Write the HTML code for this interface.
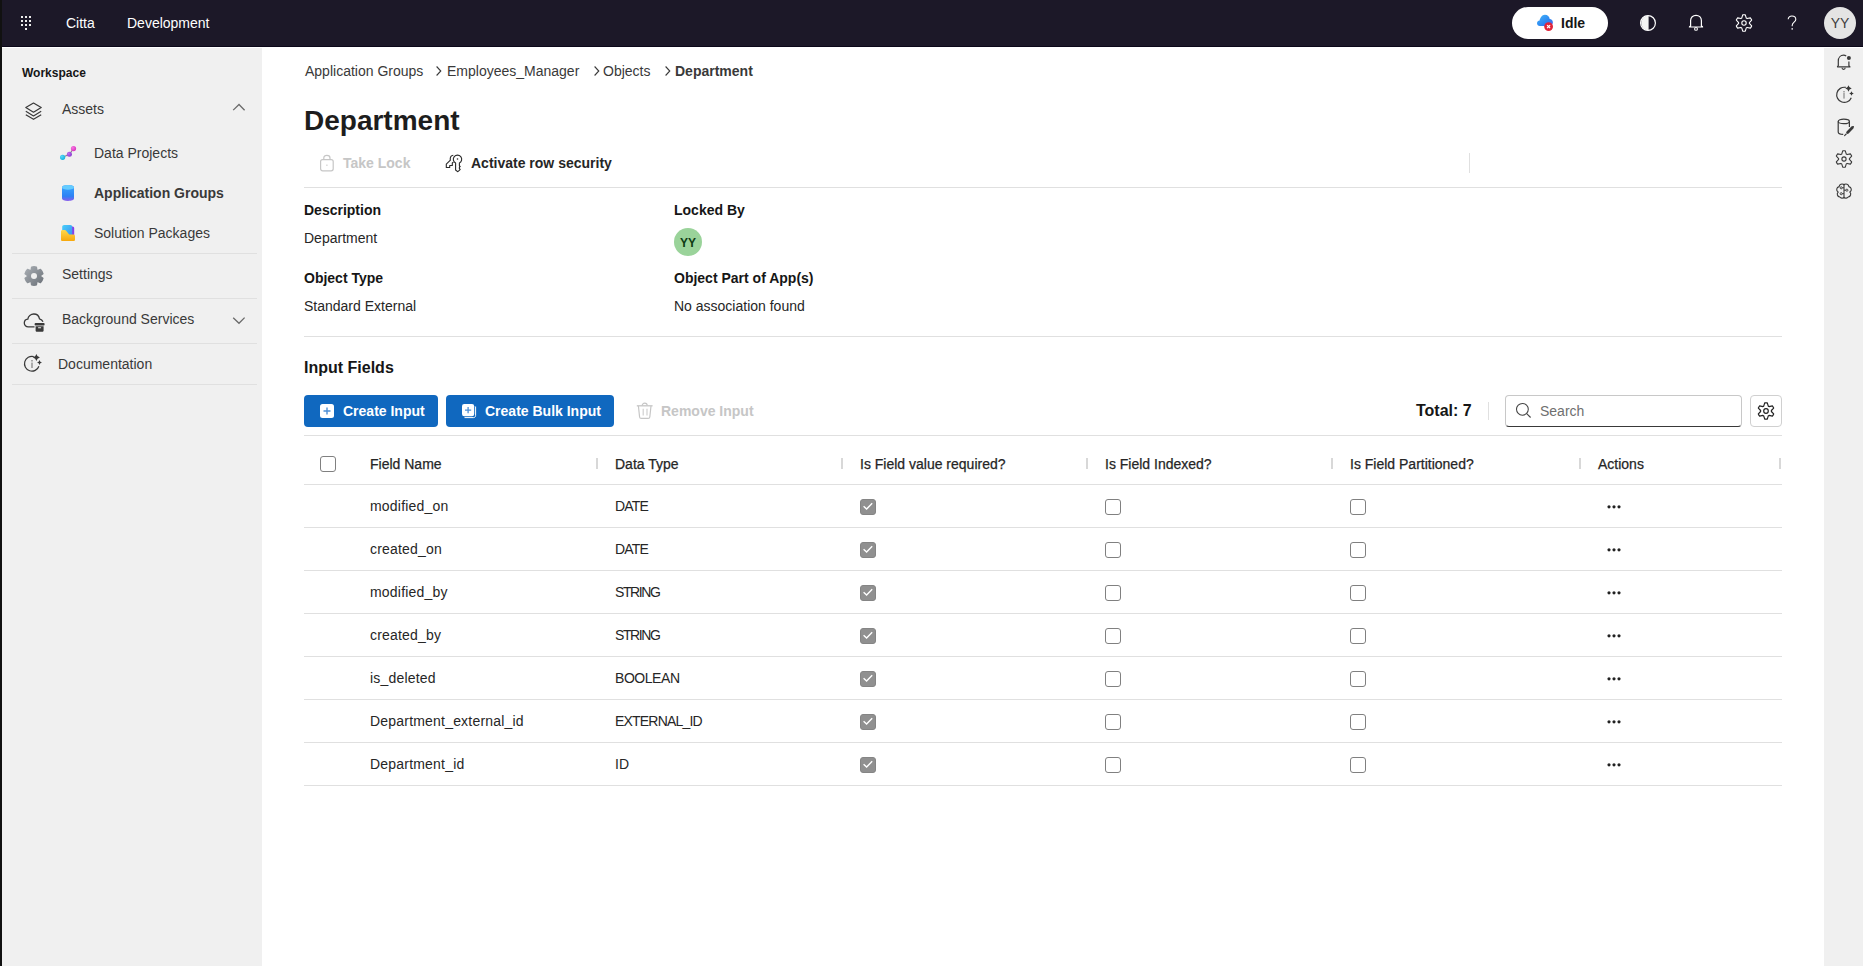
<!DOCTYPE html>
<html><head><meta charset="utf-8"><style>
*{box-sizing:border-box;margin:0;padding:0}
html,body{width:1863px;height:966px;overflow:hidden;background:#fff;font-family:"Liberation Sans",sans-serif;color:#161616}
.a{position:absolute}
.t{position:absolute;white-space:nowrap;line-height:1;font-size:14px}
.b{font-weight:700}
svg{position:absolute;overflow:visible}
.hd{color:#fff}
.sb{color:#393939}
.div{position:absolute;height:1px;background:#e0e0e0}
.cb{position:absolute;width:16px;height:16px;border:1.5px solid #808080;border-radius:3px;background:#fff}
.cbk{position:absolute;width:16px;height:16px;border-radius:3px;background:#909090;border:1px solid #858585}
.dot{position:absolute;width:3px;height:3px;border-radius:50%;background:#222}
.tc{color:#262626}
.sep{position:absolute;width:2px;height:11px;background:#d8d8d8}
</style></head><body>
<div class="a" style="left:0;top:0;width:1863px;height:47px;background:#1c1828;border-bottom:1px solid #0b0719"></div>
<div class="a" style="left:0;top:0;width:2px;height:966px;background:#111"></div>
<div class="a" style="left:2px;top:48px;width:260px;height:918px;background:#f0f0f0"></div>
<div class="a" style="left:1824px;top:48px;width:39px;height:918px;background:#f0f0f0"></div>
<svg style="left:0;top:0" width="50" height="47"><g fill="#ececec"><rect x="21" y="16" width="2" height="2"/><rect x="25" y="16" width="2" height="2"/><rect x="29" y="16" width="2" height="2"/><rect x="21" y="20" width="2" height="2"/><rect x="25" y="20" width="2" height="2"/><rect x="29" y="20" width="2" height="2"/><rect x="21" y="24" width="2" height="2"/><rect x="25" y="24" width="2" height="2"/><rect x="29" y="24" width="2" height="2"/><rect x="25" y="28" width="2" height="2"/></g></svg>
<div class="t hd" style="left:66px;top:16px">Citta</div>
<div class="t hd" style="left:127px;top:16px">Development</div>
<div class="a" style="left:1512px;top:7px;width:96px;height:32px;border-radius:16px;background:#fff"></div>
<svg style="left:1536px;top:14px" width="18" height="18" viewBox="0 0 18 18">
<defs><linearGradient id="cg" x1="0" y1="0" x2="1" y2="1"><stop offset="0" stop-color="#45b6f8"/><stop offset="0.6" stop-color="#2b86f2"/><stop offset="1" stop-color="#5a5de6"/></linearGradient></defs>
<path d="M3.8 11.9 C2.2 11.9 1 10.7 1 9.2 C1 7.7 2.2 6.5 3.6 6.5 C4 4.3 5.8 0.8 8.9 0.8 C11.6 0.8 13.4 2.6 13.7 5.1 C15.5 5.3 16.9 6.6 16.9 8.4 C16.9 10.3 15.4 11.9 13.5 11.9 Z" fill="url(#cg)"/>
<circle cx="12.6" cy="12.6" r="4.4" fill="#e0243a"/>
<path d="M11.1 11.1 L14.1 14.1 M14.1 11.1 L11.1 14.1" stroke="#fff" stroke-width="1.3"/>
</svg>
<div class="t b" style="left:1561px;top:16px;color:#161616">Idle</div>
<svg style="left:1640px;top:15px" width="16" height="16" viewBox="0 0 16 16">
<circle cx="8" cy="8" r="7.4" fill="none" stroke="#fff" stroke-width="1.2"/>
<path d="M8.6 0.6 A7.4 7.4 0 0 0 8.6 15.4 Z" fill="#f4f4f4"/>
</svg>
<svg style="left:1688px;top:14px" width="16" height="18" viewBox="0 0 16 18">
<path d="M1.4 13 C1.4 12.5 1.7 12.2 2.6 12.1 V6.6 C2.6 3.4 5 1.3 8 1.3 C11 1.3 13.4 3.4 13.4 6.6 V12.1 C14.3 12.2 14.6 12.5 14.6 13 Z" fill="none" stroke="#fff" stroke-width="1.2" stroke-linejoin="round"/>
<circle cx="8" cy="14.9" r="1.4" fill="none" stroke="#fff" stroke-width="1.1"/>
</svg>
<svg style="left:1735px;top:14px" width="18" height="18" viewBox="0 0 18 18">
<path d="M6.72 4.11 L7.72 0.90 A8.20 8.20 0 0 1 10.28 0.90 L11.28 4.11 A5.40 5.40 0 0 1 12.10 4.58 L15.37 3.84 A8.20 8.20 0 0 1 16.66 6.06 L14.38 8.53 A5.40 5.40 0 0 1 14.38 9.47 L16.66 11.94 A8.20 8.20 0 0 1 15.37 14.16 L12.10 13.42 A5.40 5.40 0 0 1 11.28 13.89 L10.28 17.10 A8.20 8.20 0 0 1 7.72 17.10 L6.72 13.89 A5.40 5.40 0 0 1 5.90 13.42 L2.63 14.16 A8.20 8.20 0 0 1 1.34 11.94 L3.62 9.47 A5.40 5.40 0 0 1 3.62 8.53 L1.34 6.06 A8.20 8.20 0 0 1 2.63 3.84 L5.90 4.58 A5.40 5.40 0 0 1 6.72 4.11 Z" fill="none" stroke="#fff" stroke-width="1.1" stroke-linejoin="round"/>
<circle cx="9" cy="9" r="2.2" fill="none" stroke="#fff" stroke-width="1.1"/>
</svg>
<svg style="left:1786px;top:15px" width="12" height="17" viewBox="0 0 12 17">
<path d="M2.2 4.3 C2.2 2.2 3.9 1 5.9 1 C8.1 1 9.8 2.5 9.8 4.4 C9.8 7 6.2 7.4 6.2 10.3 V11.2" fill="none" stroke="#fff" stroke-width="1.1"/>
<rect x="5.5" y="13.2" width="1.4" height="1.4" fill="#fff"/>
</svg>
<div class="a" style="left:1824px;top:7px;width:32px;height:32px;border-radius:50%;background:#e4e4e4"></div>
<div class="t" style="left:1830px;top:16px;width:20px;text-align:center;color:#3d3d3d">YY</div>
<div class="t b" style="left:22px;top:67px;font-size:12px;color:#161616">Workspace</div>
<svg style="left:25px;top:102px" width="18" height="19" viewBox="0 0 18 19">
<path d="M8.5 1 L16.2 5.6 L8.5 10.2 L0.8 5.6 Z" fill="none" stroke="#393939" stroke-width="1.2" stroke-linejoin="round"/>
<path d="M0.8 9.3 L8.5 13.9 L16.2 9.3" fill="none" stroke="#393939" stroke-width="1.2" stroke-linejoin="round"/>
<path d="M0.8 12.7 L8.5 17.3 L16.2 12.7" fill="none" stroke="#393939" stroke-width="1.2" stroke-linejoin="round"/>
</svg>
<div class="t sb" style="left:62px;top:102px">Assets</div>
<svg style="left:231px;top:101px" width="16" height="10" viewBox="0 0 16 10">
<path d="M2.2 9.1 L8 3.5 L13.6 9.2" fill="none" stroke="#6a6a6a" stroke-width="1.3"/>
</svg>
<svg style="left:58px;top:144px" width="18" height="18" viewBox="0 0 18 18">
<path d="M4.6 13.3 L11.4 10.3 L15.5 4.6" stroke="#8a8290" stroke-width="1.1" fill="none"/>
<defs><radialGradient id="d1" cx="0.35" cy="0.35" r="0.7"><stop offset="0" stop-color="#5ad8f8"/><stop offset="1" stop-color="#10b0e0"/></radialGradient>
<radialGradient id="d2" cx="0.35" cy="0.35" r="0.7"><stop offset="0" stop-color="#c070f0"/><stop offset="1" stop-color="#8a38d0"/></radialGradient>
<radialGradient id="d3" cx="0.35" cy="0.35" r="0.7"><stop offset="0" stop-color="#f878e0"/><stop offset="1" stop-color="#d830c0"/></radialGradient></defs>
<circle cx="4.6" cy="13.3" r="2.6" fill="url(#d1)"/>
<circle cx="11.4" cy="10.3" r="2.5" fill="url(#d2)"/>
<circle cx="15.5" cy="4.6" r="2.6" fill="url(#d3)"/>
</svg>
<div class="t sb" style="left:94px;top:146px">Data Projects</div>
<svg style="left:61px;top:184px" width="14" height="18" viewBox="0 0 14 18">
<defs><linearGradient id="cyl" x1="0" y1="0" x2="0" y2="1"><stop offset="0" stop-color="#3aa8ff"/><stop offset="0.7" stop-color="#2d82f4"/><stop offset="1" stop-color="#8a5cec"/></linearGradient></defs>
<path d="M1 3.4 C1 1.8 3.6 1 7 1 C10.4 1 13 1.8 13 3.4 V14.6 C13 16.2 10.4 17 7 17 C3.6 17 1 16.2 1 14.6 Z" fill="url(#cyl)"/>
<ellipse cx="7" cy="3.4" rx="6" ry="2.4" fill="#66ccff"/>
</svg>
<div class="t b sb" style="left:94px;top:186px">Application Groups</div>
<svg style="left:60px;top:224px" width="16" height="18" viewBox="0 0 16 18">
<defs><linearGradient id="spg" x1="0" y1="0" x2="1" y2="1"><stop offset="0" stop-color="#48d0fa"/><stop offset="1" stop-color="#3c8ef0"/></linearGradient>
<linearGradient id="spy" x1="0" y1="0" x2="0" y2="1"><stop offset="0" stop-color="#ffd84a"/><stop offset="1" stop-color="#f7a80c"/></linearGradient></defs>
<rect x="4" y="2.5" width="10.2" height="10" rx="1.5" fill="#8640e8"/>
<path d="M2.2 3 C2.2 1.8 3 1 4.2 1 H10.4 C11.6 1 12.2 1.8 12.2 3 V13 H2.2 Z" fill="url(#spg)"/>
<path d="M1 7.5 C1 6.6 1.6 6 2.6 6 H4.6 C5.3 6 5.8 6.3 6.3 6.9 L9.2 10.4 H13.5 C14.4 10.4 15 11 15 11.9 V15.4 C15 16.3 14.4 17 13.5 17 H2.5 C1.6 17 1 16.3 1 15.4 Z" fill="url(#spy)"/>
</svg>
<div class="t sb" style="left:94px;top:226px">Solution Packages</div>
<div class="div" style="left:12px;top:253px;width:245px"></div>
<svg style="left:24px;top:266px" width="20" height="20" viewBox="0 0 20 20">
<defs><linearGradient id="sg" x1="0" y1="0" x2="1" y2="1"><stop offset="0" stop-color="#a8adb3"/><stop offset="1" stop-color="#6c7279"/></linearGradient></defs>
<path d="M7.14 4.39 L7.62 1.11 A9.20 9.20 0 0 1 12.38 1.11 L12.86 4.39 A6.30 6.30 0 0 1 13.43 4.72 L16.51 3.49 A9.20 9.20 0 0 1 18.89 7.62 L16.29 9.67 A6.30 6.30 0 0 1 16.29 10.33 L18.89 12.38 A9.20 9.20 0 0 1 16.51 16.51 L13.43 15.28 A6.30 6.30 0 0 1 12.86 15.61 L12.38 18.89 A9.20 9.20 0 0 1 7.62 18.89 L7.14 15.61 A6.30 6.30 0 0 1 6.57 15.28 L3.49 16.51 A9.20 9.20 0 0 1 1.11 12.38 L3.71 10.33 A6.30 6.30 0 0 1 3.71 9.67 L1.11 7.62 A9.20 9.20 0 0 1 3.49 3.49 L6.57 4.72 A6.30 6.30 0 0 1 7.14 4.39 Z" fill="url(#sg)" stroke="url(#sg)" stroke-width="1.4" stroke-linejoin="round"/>
<circle cx="10" cy="10" r="3" fill="#f0f0f0"/>
</svg>
<div class="t sb" style="left:62px;top:267px">Settings</div>
<div class="div" style="left:12px;top:298px;width:245px"></div>
<svg style="left:23px;top:311px" width="22" height="22" viewBox="0 0 22 22">
<path d="M11.5 15.8 H5.2 C3 15.8 1.3 14.1 1.3 12 C1.3 10 2.8 8.4 4.8 8.2 C5.3 5.4 7.8 3 10.8 3 C13.7 3 16 5.1 16.5 7.8 C18.1 8.2 19.4 9.3 20 10.8" fill="none" stroke="#393939" stroke-width="1.3"/>
<rect x="11.6" y="12" width="10" height="2.6" rx="1" fill="#393939"/>
<path d="M12.6 15.2 H20.6 V19.4 C20.6 20.2 20 20.8 19.2 20.8 H14 C13.2 20.8 12.6 20.2 12.6 19.4 Z" fill="#393939"/>
<rect x="15" y="16.2" width="3.2" height="1" rx="0.5" fill="#f0f0f0"/>
</svg>
<div class="t sb" style="left:62px;top:312px">Background Services</div>
<svg style="left:231px;top:315px" width="16" height="10" viewBox="0 0 16 10">
<path d="M2.2 2.7 L8 8.3 L13.6 2.6" fill="none" stroke="#6a6a6a" stroke-width="1.3"/>
</svg>
<div class="div" style="left:12px;top:343px;width:245px"></div>
<svg style="left:22px;top:352px" width="24" height="24" viewBox="0 0 24 24">
<path d="M16.9 14.2 A7.4 7.4 0 1 1 11.8 4.6" fill="none" stroke="#393939" stroke-width="1.2"/>
<rect x="9.35" y="10.6" width="1.3" height="5.4" fill="#888"/>
<rect x="9.35" y="8.2" width="1.3" height="1.2" fill="#666"/>
<path d="M14.4 1.9000000000000004 Q15.030000000000001 4.7700000000000005 17.9 5.4 Q15.030000000000001 6.03 14.4 8.9 Q13.77 6.03 10.9 5.4 Q13.77 4.7700000000000005 14.4 1.9000000000000004 Z" fill="#393939"/>
<path d="M17.5 7.9 Q17.95 9.950000000000001 20.0 10.4 Q17.95 10.85 17.5 12.9 Q17.05 10.85 15.0 10.4 Q17.05 9.950000000000001 17.5 7.9 Z" fill="#393939"/>
</svg>
<div class="t sb" style="left:58px;top:357px">Documentation</div>
<div class="div" style="left:12px;top:384px;width:245px"></div>
<svg style="left:1836px;top:54px" width="17" height="18" viewBox="0 0 17 18">
<path d="M1.2 12.8 L2.3 11.7 V6.9 C2.3 3.6 4.5 1.2 7.6 1.2 C8.7 1.2 9.5 1.5 10.2 2" fill="none" stroke="#393939" stroke-width="1.2" stroke-linejoin="round"/>
<path d="M12.9 7.6 V11.7 L14 12.8 H1.2" fill="none" stroke="#393939" stroke-width="1.2" stroke-linejoin="round"/>
<circle cx="12.9" cy="4.1" r="2" fill="#393939"/>
<path d="M6 13.8 A1.6 1.6 0 0 0 9.2 13.8" fill="none" stroke="#393939" stroke-width="1.1"/>
</svg>
<svg style="left:1834px;top:84px" width="22" height="22" viewBox="0 0 22 22">
<path d="M17.3 13.8 A7.6 7.6 0 1 1 11.8 3.4" fill="none" stroke="#393939" stroke-width="1.2"/>
<rect x="9.4" y="8.6" width="1.2" height="6" fill="#888"/>
<rect x="9.4" y="7.2" width="1.2" height="0.9" fill="#666"/>
<path d="M14.5 1.2999999999999998 Q15.076 3.924 17.7 4.5 Q15.076 5.076 14.5 7.7 Q13.924 5.076 11.3 4.5 Q13.924 3.924 14.5 1.2999999999999998 Z" fill="#393939"/>
<path d="M17.5 7.2 Q17.914 9.086 19.8 9.5 Q17.914 9.914 17.5 11.8 Q17.086 9.914 15.2 9.5 Q17.086 9.086 17.5 7.2 Z" fill="#393939"/>
</svg>
<svg style="left:1836px;top:117px" width="20" height="21" viewBox="0 0 20 21">
<ellipse cx="7.8" cy="4.4" rx="5.6" ry="2.2" fill="none" stroke="#393939" stroke-width="1.2"/>
<path d="M2.2 4.4 V14.9 C2.2 16.2 4.4 17.2 7.2 17.3" fill="none" stroke="#393939" stroke-width="1.2"/>
<path d="M13.4 4.4 V10" fill="none" stroke="#393939" stroke-width="1.2"/>
<path d="M11.6 15.4 L16.4 10.6" stroke="#393939" stroke-width="2.8" stroke-linecap="round"/>
<path d="M8.6 18.6 L10.2 17" stroke="#393939" stroke-width="1.1" stroke-linecap="round"/>
<path d="M16.9 10.1 L17.8 9.2" stroke="#393939" stroke-width="1" />
</svg>
<svg style="left:1835px;top:150px" width="18" height="18" viewBox="0 0 18 18">
<path d="M6.72 4.11 L7.72 0.90 A8.20 8.20 0 0 1 10.28 0.90 L11.28 4.11 A5.40 5.40 0 0 1 12.10 4.58 L15.37 3.84 A8.20 8.20 0 0 1 16.66 6.06 L14.38 8.53 A5.40 5.40 0 0 1 14.38 9.47 L16.66 11.94 A8.20 8.20 0 0 1 15.37 14.16 L12.10 13.42 A5.40 5.40 0 0 1 11.28 13.89 L10.28 17.10 A8.20 8.20 0 0 1 7.72 17.10 L6.72 13.89 A5.40 5.40 0 0 1 5.90 13.42 L2.63 14.16 A8.20 8.20 0 0 1 1.34 11.94 L3.62 9.47 A5.40 5.40 0 0 1 3.62 8.53 L1.34 6.06 A8.20 8.20 0 0 1 2.63 3.84 L5.90 4.58 A5.40 5.40 0 0 1 6.72 4.11 Z" fill="none" stroke="#393939" stroke-width="1.1" stroke-linejoin="round"/>
<circle cx="9" cy="9" r="2.1" fill="none" stroke="#393939" stroke-width="1.1"/>
</svg>
<svg style="left:1835px;top:182px" width="18" height="18" viewBox="0 0 18 18">
<path d="M9 2.8 A2.9 2.9 0 0 1 13.9 4.6 A2.9 2.9 0 0 1 14.8 10 A2.9 2.9 0 0 1 13.2 15 A2.9 2.9 0 0 1 9 15.4 A2.9 2.9 0 0 1 4.8 15 A2.9 2.9 0 0 1 3.2 10 A2.9 2.9 0 0 1 4.1 4.6 A2.9 2.9 0 0 1 9 2.8 Z" fill="none" stroke="#393939" stroke-width="1.1" stroke-linejoin="round"/>
<path d="M9 1.8 V16.4" stroke="#393939" stroke-width="1.1"/>
<path d="M7.2 5.8 H9 M7.2 11.7 H9 M10.9 8.2 H9" fill="none" stroke="#393939" stroke-width="1"/>
<circle cx="6.2" cy="5.8" r="1.05" fill="none" stroke="#393939" stroke-width="0.9"/>
<circle cx="6.2" cy="11.7" r="1.05" fill="none" stroke="#393939" stroke-width="0.9"/>
<circle cx="11.9" cy="8.2" r="1.05" fill="none" stroke="#393939" stroke-width="0.9"/>
</svg>
<div class="t" style="left:305px;top:64px;color:#393939">Application Groups</div>
<svg style="left:436px;top:66px" width="6" height="10" viewBox="0 0 6 10"><path d="M0.6 0.5 L4.8 5 L0.6 9.5" fill="none" stroke="#393939" stroke-width="1.1"/></svg>
<svg style="left:594px;top:66px" width="6" height="10" viewBox="0 0 6 10"><path d="M0.6 0.5 L4.8 5 L0.6 9.5" fill="none" stroke="#393939" stroke-width="1.1"/></svg>
<svg style="left:665px;top:66px" width="6" height="10" viewBox="0 0 6 10"><path d="M0.6 0.5 L4.8 5 L0.6 9.5" fill="none" stroke="#393939" stroke-width="1.1"/></svg>
<div class="t" style="left:447px;top:64px;color:#393939">Employees_Manager</div>
<div class="t" style="left:603px;top:64px;color:#393939">Objects</div>
<div class="t b" style="left:675px;top:64px;color:#393939">Department</div>
<div class="t b" style="left:304px;top:107px;font-size:28px;color:#1d1d1d">Department</div>
<svg style="left:319px;top:154px" width="16" height="18" viewBox="0 0 16 18">
<path d="M4.8 5.5 V4 C4.8 2.3 6 1.3 7.9 1.3 C9.8 1.3 11 2.3 11 4 V5.5" fill="none" stroke="#c6c6c6" stroke-width="1.2"/>
<rect x="1.6" y="5.6" width="12.6" height="11.2" rx="2" fill="none" stroke="#c6c6c6" stroke-width="1.2"/>
<rect x="7.3" y="10.6" width="1.2" height="1.2" fill="#c6c6c6"/>
</svg>
<div class="t b" style="left:343px;top:156px;color:#c6c6c6">Take Lock</div>
<svg style="left:445px;top:154px" width="18" height="19" viewBox="0 0 18 19">
<path d="M8.3 1.3 C6.4 1.6 5.2 3.2 5.2 5.1 C5.2 5.5 5.3 5.9 5.4 6.2 L1.3 10.2 V13.5 H4.7 V11.5 H7.3 V9 L8.4 8.1" fill="none" stroke="#2a2a2a" stroke-width="1.1" stroke-linejoin="round"/>
<path d="M10.6 9.1 A4.2 4.2 0 1 1 14.4 9.1 V11.8 L15.2 12.5 L14.4 13.2 V14.7 L15.2 15.4 L14.3 16.4 L12.6 17.7 L10.6 16 Z" fill="none" stroke="#2a2a2a" stroke-width="1.1" stroke-linejoin="round"/>
<circle cx="12.5" cy="5" r="0.8" fill="#2a2a2a"/>
</svg>
<div class="t b" style="left:471px;top:156px;color:#262626">Activate row security</div>
<div class="div" style="left:304px;top:187px;width:1478px"></div>
<div class="a" style="left:1469px;top:153px;width:1px;height:20px;background:#e0e0e0"></div>
<div class="t b" style="left:304px;top:203px">Description</div>
<div class="t" style="left:304px;top:231px;color:#262626">Department</div>
<div class="t b" style="left:674px;top:203px">Locked By</div>
<div class="a" style="left:674px;top:228px;width:28px;height:28px;border-radius:50%;background:#9ad39a"></div>
<div class="t" style="left:674px;top:237px;width:28px;text-align:center;font-size:12px;font-weight:700;color:#0e3a12">YY</div>
<div class="t b" style="left:304px;top:271px">Object Type</div>
<div class="t" style="left:304px;top:299px;color:#262626">Standard External</div>
<div class="t b" style="left:674px;top:271px">Object Part of App(s)</div>
<div class="t" style="left:674px;top:299px;color:#262626">No association found</div>
<div class="div" style="left:304px;top:336px;width:1478px"></div>
<div class="t b" style="left:304px;top:360px;font-size:16px">Input Fields</div>
<div class="a" style="left:304px;top:395px;width:134px;height:32px;border-radius:4px;background:#1068bf"></div>
<svg style="left:320px;top:404px" width="14" height="14" viewBox="0 0 14 14">
<rect x="0" y="0" width="14" height="14" rx="2.5" fill="#fff"/>
<path d="M7 3.5 V10.5 M3.5 7 H10.5" stroke="#4d8fd6" stroke-width="1.4"/>
</svg>
<div class="t b" style="left:343px;top:404px;color:#fff">Create Input</div>
<div class="a" style="left:446px;top:395px;width:168px;height:32px;border-radius:4px;background:#1068bf"></div>
<svg style="left:462px;top:404px" width="15" height="15" viewBox="0 0 15 15">
<path d="M13.6 2.5 V11.6 C13.6 12.7 12.7 13.6 11.6 13.6 H2.5" fill="none" stroke="#fff" stroke-width="1"/>
<rect x="0" y="0" width="12.2" height="12.2" rx="2.2" fill="#fff"/>
<path d="M6.1 3 V9.2 M3 6.1 H9.2" stroke="#4d8fd6" stroke-width="1.3"/>
</svg>
<div class="t b" style="left:485px;top:404px;color:#fff">Create Bulk Input</div>
<svg style="left:636px;top:401px" width="18" height="19" viewBox="0 0 18 19">
<path d="M0.8 4.8 H16.6" stroke="#c6c6c6" stroke-width="1.3"/>
<path d="M6.2 4.6 A2.5 2.5 0 0 1 11.2 4.6" fill="none" stroke="#c6c6c6" stroke-width="1.2"/>
<path d="M2.4 5 L3.6 16 C3.7 16.9 4.3 17.4 5.2 17.4 H12.2 C13.1 17.4 13.7 16.9 13.8 16 L15 5" fill="none" stroke="#c6c6c6" stroke-width="1.2"/>
<path d="M7.2 7.8 V14.6 M11 7.8 V14.6" stroke="#d0d0d0" stroke-width="1.2"/>
</svg>
<div class="t b" style="left:661px;top:404px;color:#c6c6c6">Remove Input</div>
<div class="t b" style="left:1416px;top:403px;font-size:16px">Total: 7</div>
<div class="a" style="left:1488px;top:402px;width:1px;height:18px;background:#e0e0e0"></div>
<div class="a" style="left:1505px;top:395px;width:237px;height:32px;border:1px solid #c8c8c8;border-bottom:1px solid #393939;border-radius:4px;background:#fff"></div>
<svg style="left:1515px;top:402px" width="18" height="18" viewBox="0 0 18 18">
<circle cx="7.4" cy="7.3" r="5.9" fill="none" stroke="#444" stroke-width="1.05"/>
<path d="M11.7 11.6 L15.6 15.5" stroke="#444" stroke-width="1.1"/>
</svg>
<div class="t" style="left:1540px;top:404px;color:#6f6f6f">Search</div>
<div class="a" style="left:1750px;top:395px;width:32px;height:32px;border:1px solid #d0d0d0;border-radius:4px;background:#fff"></div>
<svg style="left:1757px;top:402px" width="18" height="18" viewBox="0 0 18 18">
<path d="M6.72 4.11 L7.72 0.90 A8.20 8.20 0 0 1 10.28 0.90 L11.28 4.11 A5.40 5.40 0 0 1 12.10 4.58 L15.37 3.84 A8.20 8.20 0 0 1 16.66 6.06 L14.38 8.53 A5.40 5.40 0 0 1 14.38 9.47 L16.66 11.94 A8.20 8.20 0 0 1 15.37 14.16 L12.10 13.42 A5.40 5.40 0 0 1 11.28 13.89 L10.28 17.10 A8.20 8.20 0 0 1 7.72 17.10 L6.72 13.89 A5.40 5.40 0 0 1 5.90 13.42 L2.63 14.16 A8.20 8.20 0 0 1 1.34 11.94 L3.62 9.47 A5.40 5.40 0 0 1 3.62 8.53 L1.34 6.06 A8.20 8.20 0 0 1 2.63 3.84 L5.90 4.58 A5.40 5.40 0 0 1 6.72 4.11 Z" fill="none" stroke="#222" stroke-width="1.2" stroke-linejoin="round"/>
<circle cx="9" cy="9" r="2.3" fill="none" stroke="#222" stroke-width="1.2"/>
</svg>
<div class="div" style="left:304px;top:435px;width:1478px"></div>
<div class="cb" style="left:320px;top:456px"></div>
<div class="t tc" style="left:370px;top:457px;-webkit-text-stroke:0.25px #262626">Field Name</div>
<div class="sep" style="left:596px;top:458px"></div>
<div class="t tc" style="left:615px;top:457px;-webkit-text-stroke:0.25px #262626">Data Type</div>
<div class="sep" style="left:841px;top:458px"></div>
<div class="t tc" style="left:860px;top:457px;-webkit-text-stroke:0.25px #262626">Is Field value required?</div>
<div class="sep" style="left:1086px;top:458px"></div>
<div class="t tc" style="left:1105px;top:457px;-webkit-text-stroke:0.25px #262626">Is Field Indexed?</div>
<div class="sep" style="left:1331px;top:458px"></div>
<div class="t tc" style="left:1350px;top:457px;-webkit-text-stroke:0.25px #262626">Is Field Partitioned?</div>
<div class="sep" style="left:1579px;top:458px"></div>
<div class="t tc" style="left:1598px;top:457px;-webkit-text-stroke:0.25px #262626">Actions</div>
<div class="sep" style="left:1779px;top:458px"></div>
<div class="div" style="left:304px;top:484px;width:1478px"></div>
<div class="t tc" style="left:370px;top:499px;letter-spacing:0.2px">modified_on</div>
<div class="t tc" style="left:615px;top:499px;letter-spacing:-0.8px">DATE</div>
<div class="cbk" style="left:860px;top:499px"><svg style="left:-1px;top:-1px" width="16" height="16" viewBox="0 0 16 16"><path d="M3.6 7.3 L6.6 10.1 L12.2 4.3" fill="none" stroke="#fff" stroke-width="1.4"/></svg></div>
<div class="cb" style="left:1105px;top:499px"></div>
<div class="cb" style="left:1350px;top:499px"></div>
<svg style="left:1600px;top:485px" width="30" height="42"><circle cx="9" cy="21.8" r="1.6" fill="#222"/><circle cx="14" cy="21.8" r="1.6" fill="#222"/><circle cx="19" cy="21.8" r="1.6" fill="#222"/></svg>
<div class="div" style="left:304px;top:527px;width:1478px"></div>
<div class="t tc" style="left:370px;top:542px;letter-spacing:0.2px">created_on</div>
<div class="t tc" style="left:615px;top:542px;letter-spacing:-0.8px">DATE</div>
<div class="cbk" style="left:860px;top:542px"><svg style="left:-1px;top:-1px" width="16" height="16" viewBox="0 0 16 16"><path d="M3.6 7.3 L6.6 10.1 L12.2 4.3" fill="none" stroke="#fff" stroke-width="1.4"/></svg></div>
<div class="cb" style="left:1105px;top:542px"></div>
<div class="cb" style="left:1350px;top:542px"></div>
<svg style="left:1600px;top:528px" width="30" height="42"><circle cx="9" cy="21.8" r="1.6" fill="#222"/><circle cx="14" cy="21.8" r="1.6" fill="#222"/><circle cx="19" cy="21.8" r="1.6" fill="#222"/></svg>
<div class="div" style="left:304px;top:570px;width:1478px"></div>
<div class="t tc" style="left:370px;top:585px;letter-spacing:0.2px">modified_by</div>
<div class="t tc" style="left:615px;top:585px;letter-spacing:-1.4px">STRING</div>
<div class="cbk" style="left:860px;top:585px"><svg style="left:-1px;top:-1px" width="16" height="16" viewBox="0 0 16 16"><path d="M3.6 7.3 L6.6 10.1 L12.2 4.3" fill="none" stroke="#fff" stroke-width="1.4"/></svg></div>
<div class="cb" style="left:1105px;top:585px"></div>
<div class="cb" style="left:1350px;top:585px"></div>
<svg style="left:1600px;top:571px" width="30" height="42"><circle cx="9" cy="21.8" r="1.6" fill="#222"/><circle cx="14" cy="21.8" r="1.6" fill="#222"/><circle cx="19" cy="21.8" r="1.6" fill="#222"/></svg>
<div class="div" style="left:304px;top:613px;width:1478px"></div>
<div class="t tc" style="left:370px;top:628px;letter-spacing:0.2px">created_by</div>
<div class="t tc" style="left:615px;top:628px;letter-spacing:-1.4px">STRING</div>
<div class="cbk" style="left:860px;top:628px"><svg style="left:-1px;top:-1px" width="16" height="16" viewBox="0 0 16 16"><path d="M3.6 7.3 L6.6 10.1 L12.2 4.3" fill="none" stroke="#fff" stroke-width="1.4"/></svg></div>
<div class="cb" style="left:1105px;top:628px"></div>
<div class="cb" style="left:1350px;top:628px"></div>
<svg style="left:1600px;top:614px" width="30" height="42"><circle cx="9" cy="21.8" r="1.6" fill="#222"/><circle cx="14" cy="21.8" r="1.6" fill="#222"/><circle cx="19" cy="21.8" r="1.6" fill="#222"/></svg>
<div class="div" style="left:304px;top:656px;width:1478px"></div>
<div class="t tc" style="left:370px;top:671px;letter-spacing:0.2px">is_deleted</div>
<div class="t tc" style="left:615px;top:671px;letter-spacing:-0.45px">BOOLEAN</div>
<div class="cbk" style="left:860px;top:671px"><svg style="left:-1px;top:-1px" width="16" height="16" viewBox="0 0 16 16"><path d="M3.6 7.3 L6.6 10.1 L12.2 4.3" fill="none" stroke="#fff" stroke-width="1.4"/></svg></div>
<div class="cb" style="left:1105px;top:671px"></div>
<div class="cb" style="left:1350px;top:671px"></div>
<svg style="left:1600px;top:657px" width="30" height="42"><circle cx="9" cy="21.8" r="1.6" fill="#222"/><circle cx="14" cy="21.8" r="1.6" fill="#222"/><circle cx="19" cy="21.8" r="1.6" fill="#222"/></svg>
<div class="div" style="left:304px;top:699px;width:1478px"></div>
<div class="t tc" style="left:370px;top:714px;letter-spacing:0.2px">Department_external_id</div>
<div class="t tc" style="left:615px;top:714px;letter-spacing:-0.8px">EXTERNAL_ID</div>
<div class="cbk" style="left:860px;top:714px"><svg style="left:-1px;top:-1px" width="16" height="16" viewBox="0 0 16 16"><path d="M3.6 7.3 L6.6 10.1 L12.2 4.3" fill="none" stroke="#fff" stroke-width="1.4"/></svg></div>
<div class="cb" style="left:1105px;top:714px"></div>
<div class="cb" style="left:1350px;top:714px"></div>
<svg style="left:1600px;top:700px" width="30" height="42"><circle cx="9" cy="21.8" r="1.6" fill="#222"/><circle cx="14" cy="21.8" r="1.6" fill="#222"/><circle cx="19" cy="21.8" r="1.6" fill="#222"/></svg>
<div class="div" style="left:304px;top:742px;width:1478px"></div>
<div class="t tc" style="left:370px;top:757px;letter-spacing:0.2px">Department_id</div>
<div class="t tc" style="left:615px;top:757px;letter-spacing:0px">ID</div>
<div class="cbk" style="left:860px;top:757px"><svg style="left:-1px;top:-1px" width="16" height="16" viewBox="0 0 16 16"><path d="M3.6 7.3 L6.6 10.1 L12.2 4.3" fill="none" stroke="#fff" stroke-width="1.4"/></svg></div>
<div class="cb" style="left:1105px;top:757px"></div>
<div class="cb" style="left:1350px;top:757px"></div>
<svg style="left:1600px;top:743px" width="30" height="42"><circle cx="9" cy="21.8" r="1.6" fill="#222"/><circle cx="14" cy="21.8" r="1.6" fill="#222"/><circle cx="19" cy="21.8" r="1.6" fill="#222"/></svg>
<div class="div" style="left:304px;top:785px;width:1478px"></div>
</body></html>
